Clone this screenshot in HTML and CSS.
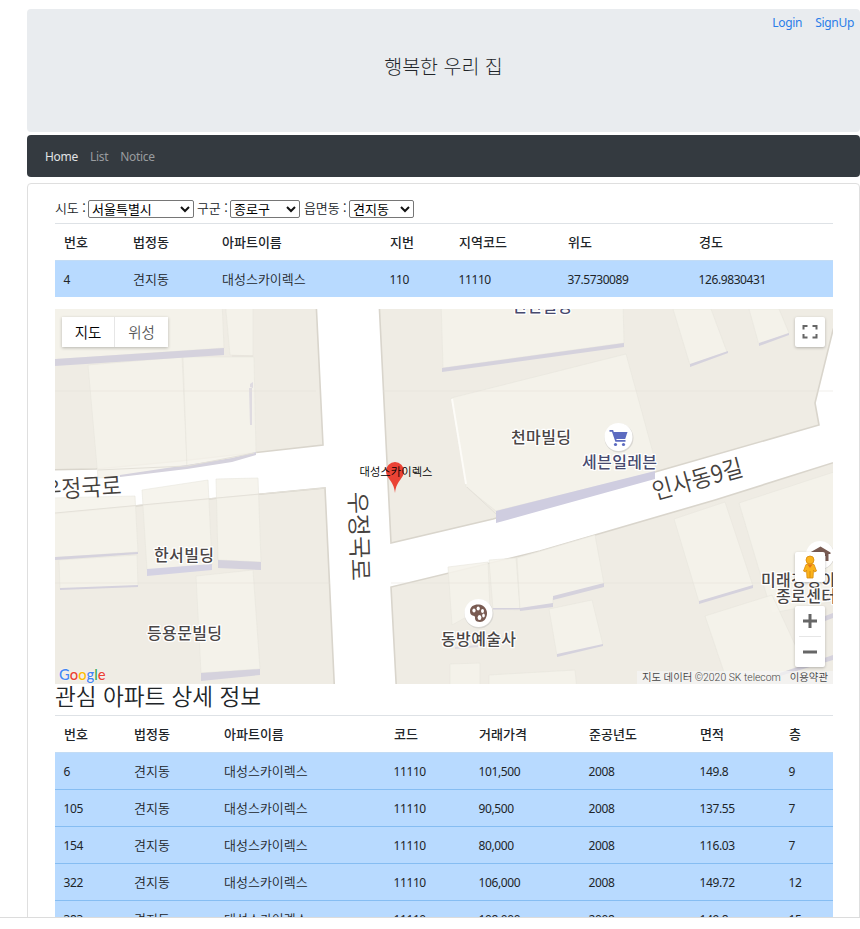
FILE: index.html
```html
<!DOCTYPE html>
<html lang="ko">
<head>
<meta charset="utf-8">
<title>행복한 우리 집</title>
<link rel="stylesheet" href="styles.css">
</head>
<body>
<div class="page">
  <header class="banner">
    <div class="account"><a href="#">Login</a><a href="#">SignUp</a></div>
    <h1>행복한 우리 집</h1>
  </header>
  <nav class="navbar">
    <a class="active" href="#">Home</a><a href="#">List</a><a href="#">Notice</a>
  </nav>
  <main class="card">
    <form class="filters">
      <label class="l-sido" for="sido">시도 :</label>
      <span class="pick s-sido"><select id="sido"><option>서울특별시</option></select><svg width="10" height="7" viewBox="0 0 10 7"><path d="M1 1L5 5L9 1" fill="none" stroke="#111" stroke-width="2"/></svg></span>
      <label class="l-gugun" for="gugun">구군 :</label>
      <span class="pick s-gugun"><select id="gugun"><option>종로구</option></select><svg width="10" height="7" viewBox="0 0 10 7"><path d="M1 1L5 5L9 1" fill="none" stroke="#111" stroke-width="2"/></svg></span>
      <label class="l-dong" for="dong">읍면동 :</label>
      <span class="pick s-dong"><select id="dong"><option>견지동</option></select><svg width="10" height="7" viewBox="0 0 10 7"><path d="M1 1L5 5L9 1" fill="none" stroke="#111" stroke-width="2"/></svg></span>
    </form>

    <table class="apt">
      <colgroup><col class="w69"><col class="w89"><col class="w168"><col class="w69"><col class="w109"><col class="w131"><col></colgroup>
      <thead><tr><th>번호</th><th>법정동</th><th>아파트이름</th><th>지번</th><th>지역코드</th><th>위도</th><th>경도</th></tr></thead>
      <tbody><tr><td>4</td><td class="ko">견지동</td><td class="ko">대성스카이렉스</td><td>110</td><td>11110</td><td>37.5730089</td><td>126.9830431</td></tr></tbody>
    </table>

    <div class="map">
      <svg class="tiles" viewBox="55 309 778 375" width="778" height="375">
        <rect x="55" y="309" width="778" height="375" fill="#efece4"/>
        <g fill="#fff" stroke="#d9d5cc" stroke-width="1.6">
          <path d="M316 300L323 445L180 461L96 469L40 470V515L325 488L335 700H397L391 587L540 551L715 500L845 459V300L833 330L815 403L819 425L655 472L493 519L391 543L379 300Z"/>
        </g>
        <g fill="#f5f2eb" fill-opacity=".88" stroke="#e8e5dd" stroke-width=".6">
          <path d="M50 300H222L224 348L50 360Z"/>
          <path d="M225 300H253V356L230 355Z"/>
          <path d="M88 365L182 357L187 466L120 476L98 478Z"/>
          <path d="M183 357L254 357L256 453L232 460L187 466Z"/>
          <path d="M441 300H623L624 343L443 368Z"/>
          <path d="M451 398L626 354L655 460V472L496 511L466 487Z"/>
          <path d="M673 309H711L727 352L690 365Z"/>
          <path d="M749 309H779L789 333L759 345Z"/>
          <path d="M50 498L135 496L138 552L50 558Z"/>
          <path d="M59 560L137 555L138 586L60 589Z"/>
          <path d="M142 490L208 480L212 565L147 570Z"/>
          <path d="M216 479L258 478L261 562L218 560Z"/>
          <path d="M196 576L253 570L260 669L201 673Z"/>
          <path d="M448 567L488 562L490 609L470 615L452 625Z"/>
          <path d="M489 560L516 558L520 610L493 609Z"/>
          <path d="M517 558L595 535L604 584L553 598V604L520 609Z"/>
          <path d="M549 609L592 600L603 645L557 656Z"/>
          <path d="M450 664L480 663V690H450Z"/>
          <path d="M489 675L575 670L577 690H489Z"/>
          <path d="M674 519L725 502L753 586L699 602Z"/>
          <path d="M739 503L840 470V600L772 613Z"/>
          <path d="M705 616L772 595L804 664L780 674L728 684Z"/>
        </g>
        <g fill="#d5d2dd">
          <path d="M55 359L224 348V355L55 366Z"/>
          <path d="M120 475L187 465L232 458L256 452V455L232 462L187 469L120 477Z"/>
          <path d="M442 368L624 343V347L442 372Z"/>
          <path d="M496 511L655 471V479L496 523Z" fill="#cfcde0"/>
          <path d="M690 364L728 351V353L690 367Z"/>
          <path d="M759 343L789 333V335L759 346Z"/>
          <path d="M55 557L138 552V554L55 560Z"/>
          <path d="M60 588L138 585V587L60 590Z"/>
          <path d="M147 569L212 564V570L147 576Z" fill="#d4d2e3"/>
          <path d="M218 560L261 562V570L218 568Z"/>
          <path d="M201 673L260 669V675L201 681Z"/>
          <path d="M553 596L604 583V587L553 600Z"/>
          <path d="M493 608L520 608L553 603V607L520 611V609.500H493Z"/>
          <path d="M557 654L603 644V646L557 657Z"/>
          <path d="M699 601L753 585V588L699 604Z"/>
          <path d="M780 673L833 655V660L780 676Z"/>
          <path d="M825 616L833 613V618L825 621Z"/>
          <path d="M250 384L253 382V388L250 387ZM249 388H252V425H250Z" opacity=".7"/>
          <path d="M455 647L478 645V647L455 649Z" opacity=".7"/>
        </g>
        <g fill="none" stroke="#e4e1d9" stroke-width="1">
          <path d="M55 391H316M383 391H833M55 583H330M391 583H833" opacity=".5"/>
          <path d="M98 470L187 466L254 453M55 513L325 488M467 487L496 514M232 356H253"/>
          <path d="M452 399L466 484" stroke="#fdfcf8" stroke-width="2"/>
        </g>

        <g class="road">
          <text transform="translate(655 500) rotate(-15.500)" textLength="93" lengthAdjust="spacingAndGlyphs">인사동9길</text>
          <text transform="translate(349 492) rotate(88)" textLength="89" lengthAdjust="spacingAndGlyphs">우정국로</text>
          <text transform="translate(42 499) rotate(-3.500)" textLength="80" lengthAdjust="spacingAndGlyphs">우정국로</text>
        </g>
        <g class="place">
          <text x="511" y="442.500" textLength="60">천마빌딩</text>
          <text x="154" y="560.500" textLength="60">한서빌딩</text>
          <text x="147" y="638.500" textLength="75">등용문빌딩</text>
          <text x="441" y="644.500" textLength="75">동방예술사</text>
          <text x="512" y="311.500" textLength="60" class="shop">천천빌딩</text>
          <text x="582" y="468" textLength="75" class="shop">세븐일레븐</text>
        </g>
        <g class="pin">
          <circle cx="619" cy="438" r="14.500" fill="#d9d7d2"/><circle cx="618.500" cy="437" r="14" fill="#fff"/>
          <path d="M609.500 430.800h3l3.500 10h9.500" fill="none" stroke="#5c6bc0" stroke-width="1.700"/>
          <path d="M613 432h14.500l-2.300 7h-9.700z" fill="#5c6bc0"/>
          <circle cx="615.500" cy="444.500" r="1.600" fill="#5c6bc0"/><circle cx="623.500" cy="444.500" r="1.600" fill="#5c6bc0"/>
          <circle cx="479" cy="614" r="14.500" fill="#d9d7d2"/><circle cx="478.500" cy="613" r="14" fill="#fff"/>
          <path d="M470 611c0-5 5-7 9-6.500c5 .500 8.500 5 8 9.500c-.500 5-3.500 8-7 8c-5 0-5-3-5-5s-5 0-5-6z" fill="#795b52"/>
          <g fill="#fff"><ellipse cx="474" cy="610.500" rx="1.600" ry="2"/><ellipse cx="478.200" cy="608.600" rx="1.600" ry="2"/><ellipse cx="482.500" cy="611" rx="1.500" ry="2"/><ellipse cx="483.500" cy="615.500" rx="1.300" ry="1.900"/><ellipse cx="479.500" cy="617.500" rx="1.900" ry="2.600"/></g>
          <circle cx="820.500" cy="555.500" r="14" fill="#d9d7d2"/><circle cx="820" cy="555" r="14" fill="#fff"/>
          <path d="M810 552.500l10.500-6l10 6v1.500h-2v7h-3v-5h-3v5h-3v-7h-9.500z" fill="#795b52"/>
        </g>
        <g class="place">
          <text x="761" y="586" textLength="90">미래경영아카</text>
          <text x="776" y="602" textLength="60">종로센터</text>
        </g>
        <path d="M395 493c-.700-7-3-10-5.500-13.500c-1.800-2.500-3.500-5-3.500-8.500a9 9 0 0 1 18 0c0 3.500-1.700 6-3.500 8.500c-2.500 3.500-4.800 6.500-5.500 13.500z" fill="#ea4335"/>
        <text class="marker" x="359.500" y="475.500" textLength="73">대성스카이렉스</text>
      </svg>
      <div class="types"><button class="on">지도</button><button>위성</button></div>
      <button class="ctl full">
        <svg width="16" height="14" viewBox="0 0 16 14"><path d="M1.500 4.500V1H5.500M10.500 1H14.500V4.500M14.500 9V12.500H10.500M5.500 12.500H1.500V9" fill="none" stroke="#666" stroke-width="2"/></svg>
      </button>
      <button class="ctl pegman">
        <svg width="14" height="24" viewBox="0 0 14 24"><path d="M3 9.500Q7 7 11 9.500L13.500 16L11.500 17L10.500 15L10 23H4L3.500 15L2.500 17L.500 16Z" fill="#fbb31c" stroke="#d98c0c" stroke-width=".8"/><path d="M4.500 9.500L7 13L9.500 9.500Z" fill="#e3721b"/><path d="M7 16V23" stroke="#d98c0c"/><circle cx="7" cy="5" r="4" fill="#fbb31c" stroke="#d98c0c" stroke-width=".8"/></svg>
      </button>
      <div class="zoom">
        <button><svg width="14" height="14" viewBox="0 0 14 14"><path d="M0 7H14M7 0V14" stroke="#666" stroke-width="3"/></svg></button>
        <button><svg width="14" height="14" viewBox="0 0 14 14"><path d="M0 7H14" stroke="#666" stroke-width="3"/></svg></button>
      </div>
      <div class="logo"><span class="b">G</span><span class="r">o</span><span class="y">o</span><span class="b">g</span><span class="g">l</span><span class="r">e</span></div>
      <div class="credits"><span>지도 데이터 ©2020 SK telecom</span><span>이용약관</span></div>
    </div>

    <h2>관심 아파트 상세 정보</h2>
    <table class="apt deals">
      <colgroup><col class="w70"><col class="w90"><col class="w170"><col class="w85"><col class="w110"><col class="w111"><col class="w89"><col></colgroup>
      <thead><tr><th>번호</th><th>법정동</th><th>아파트이름</th><th>코드</th><th>거래가격</th><th>준공년도</th><th>면적</th><th>층</th></tr></thead>
      <tbody>
        <tr><td>6</td><td class="ko">견지동</td><td class="ko">대성스카이렉스</td><td>11110</td><td>101,500</td><td>2008</td><td>149.8</td><td>9</td></tr>
        <tr><td>105</td><td class="ko">견지동</td><td class="ko">대성스카이렉스</td><td>11110</td><td>90,500</td><td>2008</td><td>137.55</td><td>7</td></tr>
        <tr><td>154</td><td class="ko">견지동</td><td class="ko">대성스카이렉스</td><td>11110</td><td>80,000</td><td>2008</td><td>116.03</td><td>7</td></tr>
        <tr><td>322</td><td class="ko">견지동</td><td class="ko">대성스카이렉스</td><td>11110</td><td>106,000</td><td>2008</td><td>149.72</td><td>12</td></tr>
        <tr><td>383</td><td class="ko">견지동</td><td class="ko">대성스카이렉스</td><td>11110</td><td>108,000</td><td>2008</td><td>149.8</td><td>15</td></tr>
      </tbody>
    </table>
  </main>
</div>
</body>
</html>
```
FILE: styles.css
```css
* { box-sizing: border-box; }
body {
  margin: 0;
  background: #fff;
  color: #212529;
  font: 12px/18px "Noto Sans", "Noto Sans CJK KR", sans-serif;
}
a { text-decoration: none; }
button { border: 0; margin: 0; padding: 0; background: #fff; font: inherit; }
svg { display: block; }

.page {
  height: 918px;
  padding: 9px 0 0 27px;
  overflow: hidden;
  border-bottom: 1px solid #dcdcdc;
}

.banner { height: 123px; background: #e9ecef; border-radius: 4px; }
.account {
  display: flex;
  justify-content: flex-end;
  gap: 13px;
  height: 44px;
  padding: 5px 6px 0 0;
}
.account a { color: #2a7de9; letter-spacing: -.3px; }
.banner h1 {
  margin: 0;
  text-align: center;
  font: 300 19.5px/26px "Noto Sans CJK KR", sans-serif;
}

.navbar {
  display: flex;
  align-items: center;
  gap: 12px;
  height: 42px;
  margin-top: 3px;
  padding: 2px 18px 0;
  border-radius: 4px;
  background: #343a40;
}
.navbar a { color: #999c9f; letter-spacing: -.3px; }
.navbar a.active { color: #e2e4e6; }

.card {
  height: 760px;
  margin-top: 6px;
  padding: 14px 26px 0 27px;
  border: 1px solid #dfdfdf;
  border-radius: 4px;
}

.filters {
  display: flex;
  align-items: center;
  height: 22px;
  margin-bottom: 3px;
  font: 13px/18px "Noto Sans CJK KR", sans-serif;
}
.filters label { height: 20px; white-space: nowrap; letter-spacing: -.1px; font-weight: 350; }
.pick { display: grid; align-items: center; height: 18px; }
.pick > * { grid-area: 1 / 1; }
.pick svg { justify-self: end; margin-right: 4px; pointer-events: none; }
.pick select {
  appearance: none;
  width: 100%;
  height: 18px;
  margin: 0;
  padding: 0 0 0 3px;
  border: 1px solid #767676;
  border-radius: 2px;
  background: #fff;
  color: #000;
  font: 13px/16px "Noto Sans CJK KR", sans-serif;
}
.l-sido { width: 33px; }
.s-sido { width: 106px; margin-right: 3px; }
.l-gugun { width: 33px; }
.s-gugun { width: 70px; margin-right: 4px; }
.l-dong { width: 45px; }
.s-dong { width: 65px; }

.apt {
  width: 778px;
  margin: 0 0 12px;
  border-collapse: separate;
  border-spacing: 0;
  table-layout: fixed;
}
.apt th, .apt td { height: 37px; padding: 0 9px; text-align: left; white-space: nowrap; }
.apt th {
  border-top: 1px solid #dee2e6;
  font: 500 13px/18px "Noto Sans CJK KR", sans-serif;
}
.apt td {
  padding: 1px 9px 0 8.5px;
  border-top: 1px solid #86bdf2;
  background: #b8daff;
  letter-spacing: -.4px;
}
.apt tr:first-child td { border-top-color: #c3dcf5; }
.apt td.ko { padding: 0 9px; font: 350 13px/18px "Noto Sans CJK KR", sans-serif; letter-spacing: 0; }
.w69 { width: 69px; }
.w70 { width: 70px; }
.w85 { width: 85px; }
.w89 { width: 89px; }
.w90 { width: 90px; }
.w109 { width: 109px; }
.w110 { width: 110px; }
.w111 { width: 111px; }
.w131 { width: 131px; }
.w168 { width: 168px; }
.w170 { width: 170px; }

.map { position: relative; width: 778px; height: 375px; overflow: hidden; }
.tiles text { font-family: "Noto Sans CJK KR", sans-serif; }
.road text { font-size: 24px; font-weight: 350; fill: #45413d; }
.place text {
  font-size: 16px;
  font-weight: 500;
  fill: #4a4646;
  stroke: #fff;
  stroke-width: 2.5px;
  stroke-linejoin: round;
  paint-order: stroke;
}
.place .shop { fill: #474a6e; }
.tiles .marker { font-size: 11.3px; font-weight: 350; fill: #000; }

.types {
  position: absolute;
  left: 7px;
  top: 8px;
  display: flex;
  height: 30px;
  box-shadow: 0 1px 3px rgba(0, 0, 0, .25);
}
.types button {
  width: 53px;
  color: #565656;
  font: 350 14.5px/30px "Noto Sans CJK KR", sans-serif;
}
.types .on { color: #000; border-right: 1px solid #e6e6e6; }
.ctl, .zoom {
  position: absolute;
  right: 8px;
  width: 30px;
  border-radius: 2px;
  box-shadow: 0 1px 3px rgba(0, 0, 0, .25);
}
.ctl { display: grid; place-items: center; height: 30px; }
.full { top: 8px; }
.pegman { top: 243px; }
.zoom { top: 297px; height: 61px; background: #fff; }
.zoom button { display: grid; place-items: center; width: 22px; height: 30px; margin: 0 4px; }
.zoom button + button { border-top: 1px solid #e6e6e6; height: 31px; }

.logo {
  position: absolute;
  left: 4px;
  bottom: 0;
  font: 500 14.8px/20px Lato, sans-serif;
  text-shadow: 0 0 2px #fff;
}
.logo .b { color: #4285f4; }
.logo .r { color: #ea4335; }
.logo .y { color: #fbbc05; }
.logo .g { color: #34a853; }
.credits {
  position: absolute;
  right: 0;
  bottom: -1px;
  display: flex;
  gap: 9px;
  height: 14px;
  padding: 0 5px;
  background: rgba(245, 245, 245, .7);
  color: #444;
  font: 350 10.4px/14px Roboto, "Noto Sans CJK KR", sans-serif;
}

h2 {
  height: 31px;
  margin: 0;
  font: 350 22.6px/24px "Noto Sans CJK KR", sans-serif;
}
```
